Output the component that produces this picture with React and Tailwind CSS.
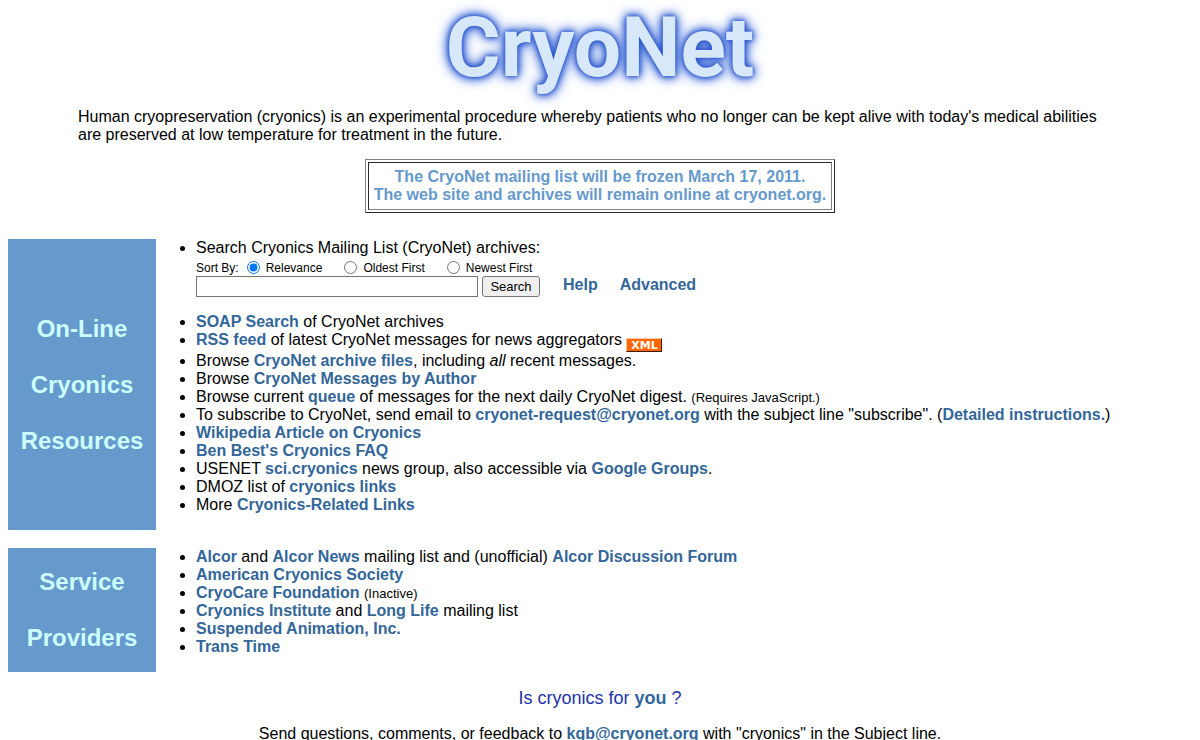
const linkClass = "font-bold text-[#336699]";

function Link({ children, href = "#" }) {
  return (
    <a href={href} className={linkClass}>
      {children}
    </a>
  );
}

function Note({ children }) {
  return <small className="text-[13px] leading-none">{children}</small>;
}

function SideHeading({ words }) {
  return (
    <h2 className="flex w-[148px] shrink-0 flex-col items-center justify-center gap-7 bg-[#6699cc] text-2xl leading-7 font-bold text-[#ccffff]">
      {words.map((word) => (
        <span key={word}>{word}</span>
      ))}
    </h2>
  );
}

function SortOption({ label, defaultChecked }) {
  return (
    <label className="flex items-center gap-1.5">
      <input
        type="radio"
        name="sort"
        defaultChecked={defaultChecked}
        className="mb-0.5 size-[13px]"
      />
      {label}
    </label>
  );
}

function SearchForm() {
  return (
    <form onSubmit={(event) => event.preventDefault()} className="mb-4">
      <div
        role="radiogroup"
        aria-labelledby="sort-by"
        className="flex items-center gap-2 pt-[3px] text-xs leading-4"
      >
        <span id="sort-by">Sort By:</span>
        <div className="flex gap-[22px]">
          <SortOption label="Relevance" defaultChecked />
          <SortOption label="Oldest First" />
          <SortOption label="Newest First" />
        </div>
      </div>
      <div className="flex items-start">
        <input
          type="text"
          aria-label="Search archives"
          className="h-[21px] w-[282px] border border-[#767676] bg-white px-0.5 text-[13px]"
        />
        <button
          type="submit"
          className="ml-1 h-[21px] w-[58px] rounded-[3px] border border-[#767676] bg-[#efefef] text-[13px] leading-[19px]"
        >
          Search
        </button>
        <div className="ml-[23px] flex gap-[22px]">
          <Link>Help</Link>
          <Link>Advanced</Link>
        </div>
      </div>
    </form>
  );
}

export default function App() {
  return (
    <div className="bg-white p-2 font-['Liberation_Sans',Arial,sans-serif] text-base leading-[18px] text-black">
      <h1 className="pb-2.5 text-center font-[Roboto,sans-serif] text-[84px] leading-[80px] font-bold text-[#d6e8fa] [text-shadow:0_0_4px_#2a55cc,0_0_8px_#2a55cc,0_0_12px_#4a76dc,0_0_16px_#7fa0ea]">
        CryoNet
      </h1>

      <p className="mt-2.5 px-[70px]">
        Human cryopreservation (cryonics) is an experimental procedure whereby patients who no
        longer can be kept alive with today's medical abilities are preserved at low temperature
        for treatment in the future.
      </p>

      <div className="mx-auto mt-[15px] w-fit border border-t-[#808080] border-r-[#2c2c2c] border-b-[#2c2c2c] border-l-[#808080] p-0.5">
        <p className="border border-t-[#2c2c2c] border-r-[#808080] border-b-[#808080] border-l-[#2c2c2c] p-[5px] text-center font-bold text-[#6699cc]">
          The CryoNet mailing list will be frozen March 17, 2011.
          <br />
          The web site and archives will remain online at cryonet.org.
        </p>
      </div>

      <section className="mt-[26px] flex">
        <SideHeading words={["On-Line", "Cryonics", "Resources"]} />
        <ul className="list-disc pb-4 pl-10">
          <li>
            Search Cryonics Mailing List (CryoNet) archives:
            <SearchForm />
          </li>
          <li>
            <Link>SOAP Search</Link> of CryoNet archives
          </li>
          <li>
            <Link>RSS feed</Link> of latest CryoNet messages for news aggregators{" "}
            <a
              href="#"
              className="inline-block h-3.5 w-9 border border-t-[#ffc8a4] border-r-[#3f1a00] border-b-[#3f1a00] border-l-[#ffc8a4] bg-[#ff6600] text-center align-[-4px] font-['DejaVu_Sans',sans-serif] text-[11px] leading-[13px] font-bold text-white"
            >
              XML
            </a>
          </li>
          <li>
            Browse <Link>CryoNet archive files</Link>, including <i>all</i> recent messages.
          </li>
          <li>
            Browse <Link>CryoNet Messages by Author</Link>
          </li>
          <li>
            Browse current <Link>queue</Link> of messages for the next daily CryoNet digest.{" "}
            <Note>(Requires JavaScript.)</Note>
          </li>
          <li>
            To subscribe to CryoNet, send email to{" "}
            <Link href="mailto:cryonet-request@cryonet.org">cryonet-request@cryonet.org</Link> with
            the subject line "subscribe". (<Link>Detailed instructions.</Link>)
          </li>
          <li>
            <Link>Wikipedia Article on Cryonics</Link>
          </li>
          <li>
            <Link>Ben Best's Cryonics FAQ</Link>
          </li>
          <li>
            USENET <Link>sci.cryonics</Link> news group, also accessible via{" "}
            <Link>Google Groups</Link>.
          </li>
          <li>
            DMOZ list of <Link>cryonics links</Link>
          </li>
          <li>
            More <Link>Cryonics-Related Links</Link>
          </li>
        </ul>
      </section>

      <section className="mt-[18px] flex">
        <SideHeading words={["Service", "Providers"]} />
        <ul className="list-disc pb-4 pl-10">
          <li>
            <Link>Alcor</Link> and <Link>Alcor News</Link> mailing list and (unofficial){" "}
            <Link>Alcor Discussion Forum</Link>
          </li>
          <li>
            <Link>American Cryonics Society</Link>
          </li>
          <li>
            <Link>CryoCare Foundation</Link> <Note>(Inactive)</Note>
          </li>
          <li>
            <Link>Cryonics Institute</Link> and <Link>Long Life</Link> mailing list
          </li>
          <li>
            <Link>Suspended Animation, Inc.</Link>
          </li>
          <li>
            <Link>Trans Time</Link>
          </li>
        </ul>
      </section>

      <footer className="mt-4 text-center">
        <p className="text-lg leading-[21px] text-[#2233aa]">
          Is cryonics for <Link>you</Link> ?
        </p>
        <p className="mt-4">
          Send questions, comments, or feedback to{" "}
          <Link href="mailto:kqb@cryonet.org">kqb@cryonet.org</Link> with "cryonics" in the Subject
          line.
        </p>
      </footer>
    </div>
  );
}
